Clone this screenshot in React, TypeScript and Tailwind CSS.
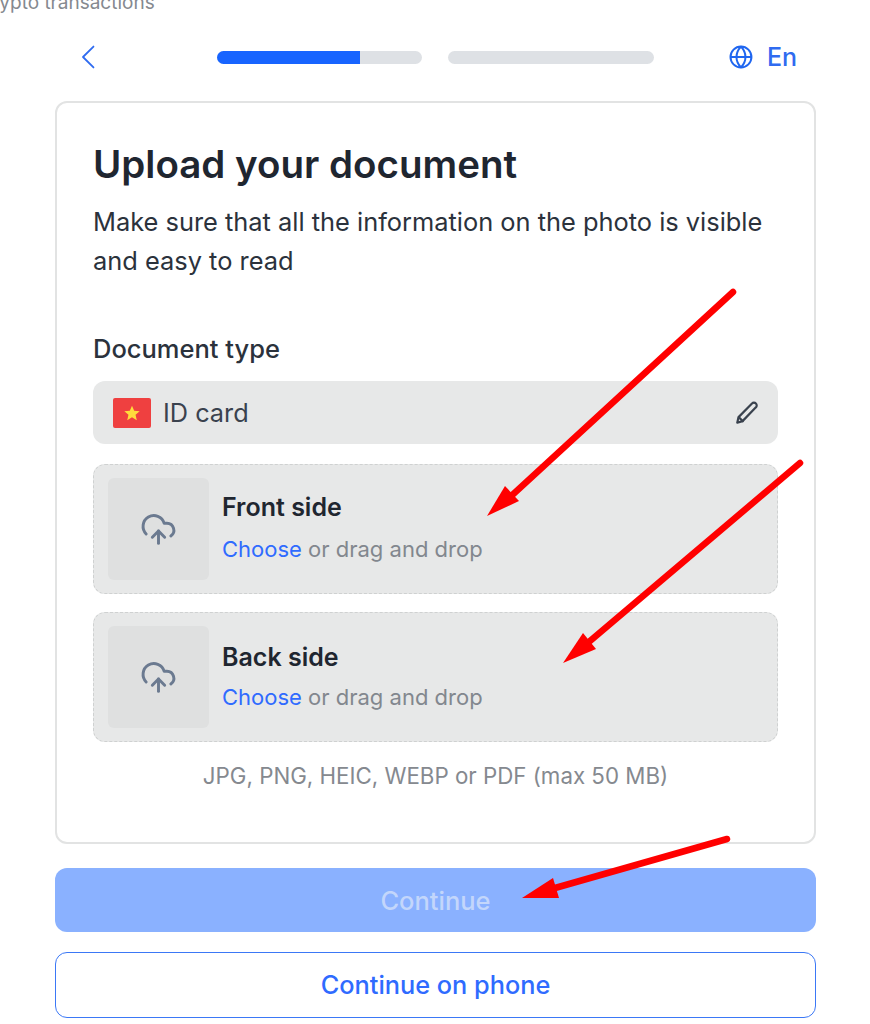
import React from 'react';

const CloudUpload = () => (
  <svg width="37" height="37" viewBox="0 0 24 24" fill="none" stroke="#6b7a90" strokeWidth="1.9" strokeLinecap="round" strokeLinejoin="round">
    <path d="M12 13v8" />
    <path d="M4 14.900A7 7 0 1 1 15.700 8h1.800a4.500 4.500 0 0 1 2.500 8.200" />
    <path d="m8 17 4-4 4 4" />
  </svg>
);

const DropZone = ({ title, textClass, hintClass }: { title: string; textClass: string; hintClass: string }) => (
  <div className="flex h-[130px] items-center rounded-xl border border-dashed border-[#cfd1d1] bg-[#e7e8e8] pl-[14px]">
    <div className="flex h-[102px] w-[101px] items-center justify-center rounded-md bg-[#dfe0e0]">
      <CloudUpload />
    </div>
    <div className={`ml-[13px] ${textClass}`}>
      <div className="text-[25px] font-semibold leading-[30px] text-[#1f2630]">{title}</div>
      <div className={`text-[22px] leading-[30px] text-[#82878e] ${hintClass}`}>
        <span className="text-[#2f6bff]">Choose</span> or drag and drop
      </div>
    </div>
  </div>
);

export default function App() {
  return (
    <div className="relative h-[1024px] w-[870px] overflow-hidden bg-white font-['Inter',sans-serif]">
      {/* cut off text from the previous section */}
      <div className="-ml-[22px] -mt-[9px] h-[30px] text-[19px] leading-[24px] text-[#85898f]">Crypto transactions</div>

      {/* Top bar */}
      <div className="ml-[81px] mt-[21px] flex h-[30px] w-[716px] items-center">
        <svg width="14" height="24" viewBox="0 0 14 24" fill="none" stroke="#2f6bf0" strokeWidth="1.800" strokeLinecap="round" strokeLinejoin="round">
          <path d="M12.500 1.500 2 12l10.500 10.500" />
        </svg>
        <div className="ml-[122px] h-[13px] w-[206px] overflow-hidden rounded-full bg-[#dee1e5]">
          <div className="h-full w-[143px] bg-[#1764ff]" />
        </div>
        <div className="ml-[25px] h-[13px] w-[206px] translate-x-[1px] rounded-full bg-[#dee1e5]" />
        <svg className="ml-[76px]" width="24" height="24" viewBox="0 0 24 24" fill="none" stroke="#1f66f0" strokeWidth="2">
          <circle cx="12" cy="12" r="10.500" />
          <path d="M1.500 12h21" />
          <path d="M12 1.500c-6 6.500-6 14.500 0 21" />
          <path d="M12 1.500c6 6.500 6 14.500 0 21" />
        </svg>
        <span className="ml-[14px] text-[25px] font-medium leading-[30px] text-[#2f6bf0]">En</span>
      </div>

      {/* Card */}
      <div className="ml-[55px] mt-[29px] h-[743px] w-[761px] rounded-xl border-2 border-[#e2e3e3] px-[36px]">
        <h1 className="mt-[37px] text-[38.500px] font-semibold leading-[48px] text-[#1f2630]">Upload your document</h1>
        <p className="mt-[14px] w-[690px] text-[25.400px] leading-[39px] text-[#2b323c]">
          Make sure that all the information on the photo is visible and easy to read
        </p>
        <div className="mt-[53px] text-[25.500px] font-medium leading-[32px] text-[#2b323c]">Document type</div>
        <div className="mt-[16px] flex h-[63px] w-[685px] items-center rounded-xl bg-[#e7e8e8] pl-[20px] pr-[18px]">
          <div className="flex h-[30px] w-[38px] items-center justify-center rounded-[2px] bg-[#ef4040]">
            <svg width="16" height="16" viewBox="0 0 24 24" fill="#ffdc3c">
              <path d="m12 1 3.300 7.500 8.200.800-6.200 5.400 1.900 8L12 18.500 4.800 22.700l1.900-8L.5 9.300l8.200-.800z" />
            </svg>
          </div>
          <span className="ml-[12px] text-[25.300px] leading-[32px] text-[#3a424e]">ID card</span>
          <svg className="ml-auto" width="26" height="26" viewBox="0 0 24 24" fill="none" stroke="#3a424e" strokeWidth="2" strokeLinecap="round" strokeLinejoin="round">
            <path d="M3 21l1.200-5.200L16.600 3.200a2.400 2.400 0 0 1 3.600 0 2.500 2.500 0 0 1 0 3.600L7.900 19.500z" />
            <path d="M4.500 16 8 19.500" />
          </svg>
        </div>
        <div className="mt-[20px] flex w-[685px] flex-col gap-[18px]">
          <DropZone title="Front side" textClass="pb-[2px]" hintClass="mt-[12px]" />
          <DropZone title="Back side" textClass="pb-0" hintClass="mt-[10px]" />
        </div>
        <div className="mt-[20px] w-[685px] text-center text-[22.300px] leading-[28px] text-[#85898f]">
          JPG, PNG, HEIC, WEBP or PDF (max 50 MB)
        </div>
      </div>

      {/* Buttons */}
      <div className="ml-[55px] mt-[24px] flex h-[64px] w-[761px] items-center justify-center rounded-xl bg-[#8ab1ff] pt-[2px] text-[25.500px] font-medium text-[#c3d6fb]">
        Continue
      </div>
      <div className="ml-[55px] mt-[20px] flex h-[66px] w-[761px] items-center justify-center rounded-xl border border-[#3b78f6] text-[25.300px] font-medium text-[#2f6bff]">
        Continue on phone
      </div>

      {/* Red annotation arrows drawn over the screenshot */}
      <svg className="absolute left-0 top-0" width="870" height="1024" viewBox="0 0 870 1024" fill="#ff0000" stroke="none">
        <line x1="733" y1="292" x2="510" y2="497" stroke="#ff0000" strokeWidth="6.500" strokeLinecap="round" />
        <polygon points="487,516 505,486 519,501" />
        <line x1="800" y1="463" x2="590" y2="641" stroke="#ff0000" strokeWidth="6.500" strokeLinecap="round" />
        <polygon points="563,663 583,633 596,649" />
        <line x1="727" y1="839" x2="555" y2="888" stroke="#ff0000" strokeWidth="6.500" strokeLinecap="round" />
        <polygon points="522,898 553,878 559,898" />
      </svg>
    </div>
  );
}
